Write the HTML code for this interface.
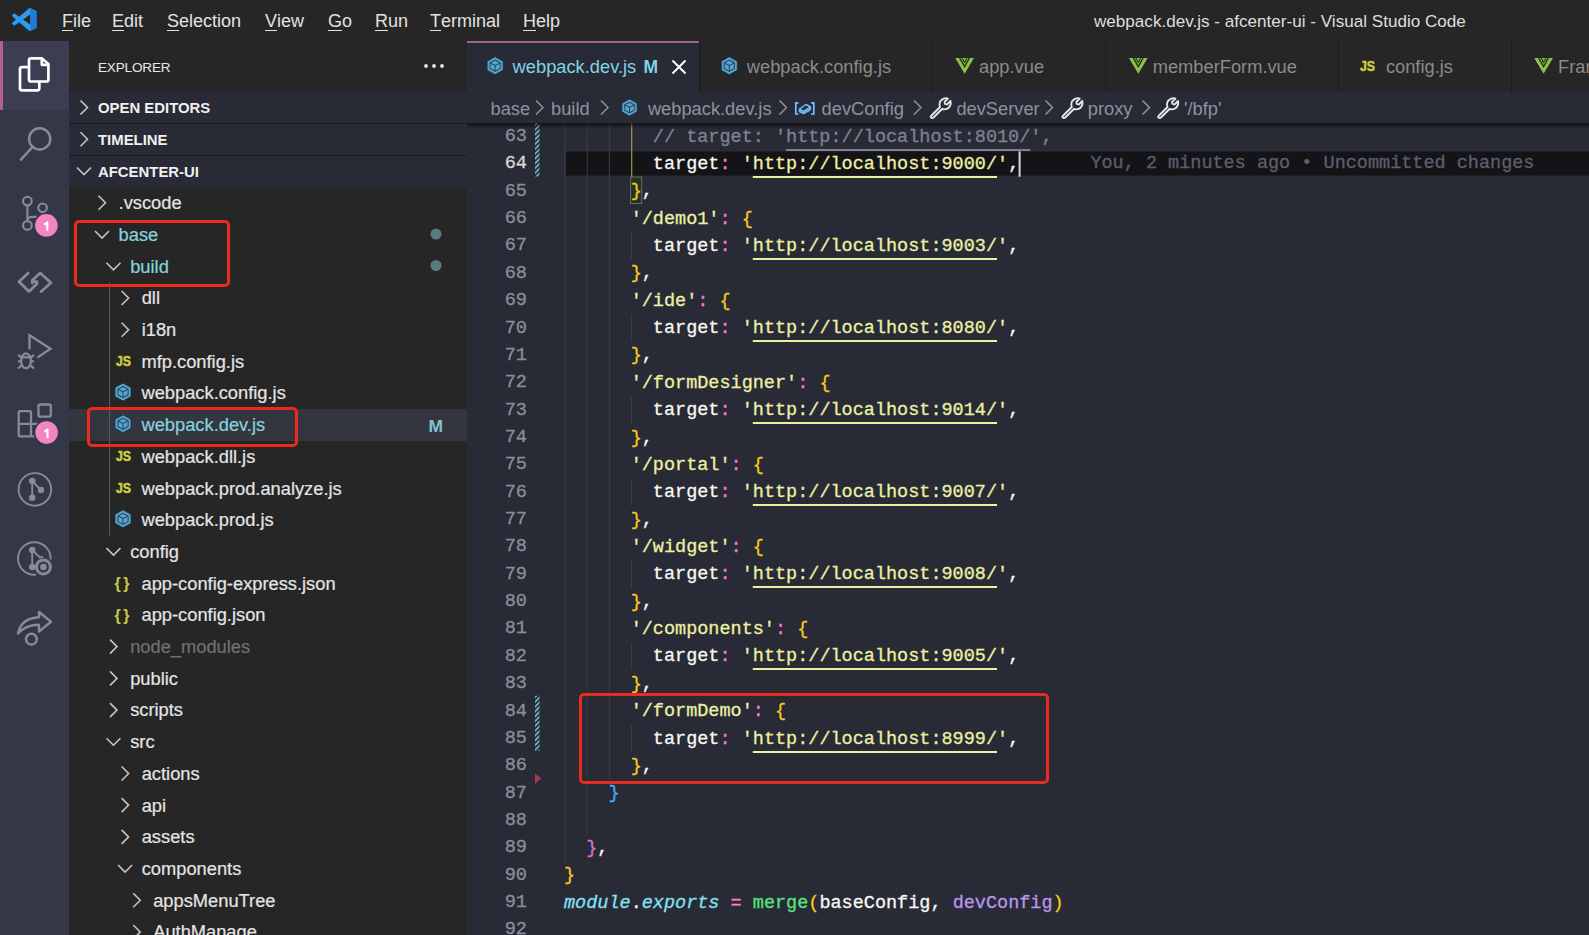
<!DOCTYPE html>
<html><head><meta charset="utf-8">
<style>
*{margin:0;padding:0;box-sizing:border-box}
html,body{width:1589px;height:935px;overflow:hidden;background:#282a36}
body{position:relative;font-family:"Liberation Sans",sans-serif}
.abs{position:absolute}
#title{position:absolute;left:0;top:0;width:1589px;height:41px;background:#262626}
.menu{position:absolute;top:10px;font-size:18px;color:#e2e2e2;line-height:22px;white-space:pre}
.menu u{text-decoration:none;border-bottom:1.3px solid #e2e2e2;display:inline-block;line-height:17px}
#wtitle{position:absolute;left:1094px;top:11px;font-size:17.1px;color:#dedede;line-height:22px;white-space:pre}
#act{position:absolute;left:0;top:41px;width:69px;height:894px;background:#343746}
#actsel{position:absolute;left:0;top:0;width:69px;height:69px;background:#3c3d51}
#actbar{position:absolute;left:0;top:0;width:3px;height:69px;background:#b3628f}
.aicon{position:absolute;left:17px;width:35px;height:35px}
.badge{position:absolute;width:22px;height:22px;border-radius:11px;background:#ff79c6;color:#fff;font-size:12.5px;font-weight:700;text-align:center;line-height:22px}
#side{position:absolute;left:69px;top:41px;width:398px;height:894px;background:#262626}
#explorer{position:absolute;left:29px;top:16.5px;font-size:13.6px;color:#e6e6e6;line-height:20px;letter-spacing:-0.2px}
.sechead{position:absolute;left:0;width:398px;height:32px;background:#282a36;border-top:1px solid #1b1c22}
.sechead span{position:absolute;left:29px;top:6px;font-size:14.9px;font-weight:700;color:#f0f0f0;line-height:20px}
.chev{position:absolute}
.row{position:absolute;left:0;width:398px;height:31.7px}
.row .t{position:absolute;top:5.3px;font-size:18.3px;line-height:22px;color:#e4e4e4;white-space:pre;-webkit-text-stroke:0.2px currentColor}
#tabs{position:absolute;left:467px;top:41px;width:1122px;height:50.5px;background:#262626}
.tab{position:absolute;top:0;height:50.5px}
.tab .t{position:absolute;top:14.5px;font-size:18.3px;line-height:22px;color:#8b8b8b;white-space:pre}
.tsep{position:absolute;top:0;width:1px;height:50.5px;background:#1c1c1c}
#crumbs{position:absolute;left:467px;top:91.5px;width:1122px;height:31.5px;background:#282a36}
.cr{position:absolute;top:6.3px;font-size:18.3px;line-height:22px;color:#8f929e;white-space:pre}
#editor{position:absolute;left:467px;top:123px;width:1122px;height:812px;background:#282a36}
.ln{position:absolute;left:564px;height:27.36px;line-height:27.36px;font-family:"Liberation Mono",monospace;font-size:18.5px;white-space:pre;color:#f8f8f2;-webkit-text-stroke:0.3px currentColor}
.lnum{position:absolute;left:466px;width:61px;margin-top:0px;text-align:right;height:27.36px;line-height:27.36px;font-family:"Liberation Mono",monospace;font-size:18.6px;color:#8a8e9c;white-space:pre;-webkit-text-stroke:0.3px currentColor}
.lnum.cur{color:#d8d8d8}
.u{text-decoration:underline;text-decoration-thickness:1.5px;text-underline-offset:6.5px;text-decoration-skip-ink:none}
.uc{text-decoration:underline;text-decoration-thickness:1.5px;text-underline-offset:6.5px;text-decoration-skip-ink:none}
.i{font-style:italic}
.guide{position:absolute;width:1px;background:#3c3e4a}
.redbox{position:absolute;border:3.4px solid #e82a1f;border-radius:5px}
</style></head><body>

<!-- TITLE BAR -->
<div id="title">
  <svg class="abs" style="left:12px;top:7.9px" width="24.5" height="23" viewBox="0 0 100 100" preserveAspectRatio="none"><path fill="#2f9bf0" d="M96.46 10.8L75.86.87a6.23 6.23 0 0 0-7.1 1.2L29.33 38.04 12.16 25a4.16 4.16 0 0 0-5.32.24L1.33 30.25a4.16 4.16 0 0 0 0 6.16L16.2 50 1.33 63.59a4.16 4.16 0 0 0 0 6.16l5.5 5.01a4.16 4.16 0 0 0 5.33.24l17.17-13.04 39.43 35.96a6.22 6.22 0 0 0 7.1 1.2l20.6-9.92a6.25 6.25 0 0 0 3.54-5.63V16.43a6.25 6.25 0 0 0-3.54-5.63zM75.02 72.7L45.1 50l29.92-22.7v45.4z"/><path fill="#1b7ad0" d="M75.02 0.9 L96.46 10.8 a6.25 6.25 0 0 1 3.54 5.63 V83.57 a6.25 6.25 0 0 1-3.54 5.63 L75.02 99.1 Z" opacity="0.9"/></svg>
  <div class="menu" style="left:62px"><u>F</u>ile</div>
  <div class="menu" style="left:112px"><u>E</u>dit</div>
  <div class="menu" style="left:167px"><u>S</u>election</div>
  <div class="menu" style="left:265px"><u>V</u>iew</div>
  <div class="menu" style="left:328px"><u>G</u>o</div>
  <div class="menu" style="left:375px"><u>R</u>un</div>
  <div class="menu" style="left:430px"><u>T</u>erminal</div>
  <div class="menu" style="left:523px"><u>H</u>elp</div>
  <div id="wtitle">webpack.dev.js - afcenter-ui - Visual Studio Code</div>
</div>

<!-- ACTIVITY BAR -->
<div id="act">
  <div id="actsel"></div><div id="actbar"></div>
  <svg class="abs" style="left:0;top:-41px" width="69" height="935" viewBox="0 0 69 935"><g fill="none" stroke="#ffffff" stroke-width="2.7" stroke-linejoin="round">
<path d="M31 58.4 H42 L48.4 64 V79.5 Q48.4 81.5 46.4 81.5 H31 Q29 81.5 29 79.5 V60.4 Q29 58.4 31 58.4 Z"/>
<path d="M41.8 58.4 V64.8 H48.4"/>
<path d="M29 67.2 H22 Q20 67.2 20 69.2 V88.3 Q20 90.3 22 90.3 H37.3 Q39.3 90.3 39.3 88.3 V81.5"/>
</g>
<g fill="none" stroke="#868a99" stroke-width="2.5" stroke-linecap="butt">
<circle cx="39.7" cy="138.9" r="10.6"/><path d="M32 147.5 L20.3 160.3"/></g>
<g fill="none" stroke="#868a99" stroke-width="2.1">
<circle cx="27.4" cy="201.1" r="4.3"/><circle cx="27.4" cy="225.4" r="4.3"/><circle cx="42.6" cy="207.8" r="4.3"/>
<path d="M27.4 205.4 V221.1"/><path d="M27.4 220 Q28 216.9 33 216.9 H37 Q42.6 216.9 42.6 212.1"/></g>
<g fill="none" stroke="#868a99" stroke-width="2.8" stroke-linecap="round" stroke-linejoin="round">
<path d="M28.2 273 L19 281.8 L29 291.5 L36.8 284 V281.7 H32.5"/>
<path d="M41.2 291.5 L51 282.8 L40.2 273 L32.3 280.3 V283"/></g>
<g fill="none" stroke="#868a99" stroke-width="2.3" stroke-linecap="butt" stroke-linejoin="miter">
<path d="M29.5 349.5 V335.2 L50.5 348.7 L37.5 357.5"/>
<ellipse cx="26" cy="360.8" rx="4.9" ry="7.4"/><path d="M21.1 357.3 H30.9"/>
<path d="M18 355 L21.5 357.5 M18 361.3 H21.1 M18 368.5 L21.7 365.3 M34 355 L30.5 357.5 M34 361.3 H30.9 M34 368.5 L30.3 365.3"/></g>
<g fill="none" stroke="#868a99" stroke-width="2.3" stroke-linejoin="round">
<rect x="18.7" y="411.2" width="12.3" height="25.1" rx="1.5"/><path d="M18.7 423.9 H46 V436.3 H31"/>
<rect x="38.5" y="404.5" width="12.3" height="12.1" rx="1.5"/></g>
<g fill="#868a99" stroke="none">
<circle cx="34.9" cy="489.4" r="16.3" fill="none" stroke="#868a99" stroke-width="1.9"/>
<circle cx="32.2" cy="481.1" r="3.3"/><circle cx="32.2" cy="497.7" r="3.3"/><circle cx="41" cy="490" r="3.2"/>
<path d="M32.2 481 V497.7 M32.2 481 L41 490" stroke="#868a99" stroke-width="1.9"/></g>
<g fill="#868a99" stroke="none">
<path d="M50.6 559.5 A16.3 16.3 0 1 0 36 574.7" fill="none" stroke="#868a99" stroke-width="1.9"/>
<circle cx="32.2" cy="550.1" r="3.3"/><circle cx="32.2" cy="567" r="3.3"/>
<path d="M32.2 550 V567 M32.2 550 L40 557.5 L43 556.8" fill="none" stroke="#868a99" stroke-width="1.9"/>
<circle cx="43.4" cy="567" r="7" fill="none" stroke="#868a99" stroke-width="3"/><circle cx="43.4" cy="567" r="3.3"/></g>
<g fill="none" stroke="#868a99" stroke-width="2.4" stroke-linejoin="round" stroke-linecap="round">
<path d="M18 633.5 Q21 618 39 617.2 V612 L51 621.8 L39 631.5 V624.7 Q26 624.7 18 633.5 Z"/>
<circle cx="31.4" cy="639.2" r="5.4"/></g><circle cx="46.4" cy="225.4" r="13" fill="#343746"/><circle cx="46.4" cy="225.4" r="11.3" fill="#f385c1"/>
<path d="M47.3 230.8 V222.3 L44.2 224.6" fill="none" stroke="#ffffff" stroke-width="2.1" stroke-linejoin="round"/>
<circle cx="46.6" cy="432.6" r="13" fill="#343746"/><circle cx="46.6" cy="432.6" r="11.3" fill="#f385c1"/>
<path d="M47.5 438 V429.5 L44.4 431.8" fill="none" stroke="#ffffff" stroke-width="2.1" stroke-linejoin="round"/></svg>
</div>

<!-- SIDEBAR -->
<div id="side">
  <div id="explorer">EXPLORER</div>
  <svg class="abs" style="left:354px;top:22px" width="22" height="6"><circle cx="3" cy="3" r="1.9" fill="#e6e6e6"/><circle cx="11" cy="3" r="1.9" fill="#e6e6e6"/><circle cx="19" cy="3" r="1.9" fill="#e6e6e6"/></svg>
  <div class="sechead" style="top:50.5px;border-top:none"><span>OPEN EDITORS</span></div>
<div class="sechead" style="top:82.2px"><span>TIMELINE</span></div>
<div class="sechead" style="top:114.0px"><span>AFCENTER-UI</span></div>
<div class="row" style="top:146.0px"><div class="t" style="left:49.6px;color:#e4e4e4">.vscode</div></div>
<div class="row" style="top:177.7px"><div class="t" style="left:49.6px;color:#86d3dd">base</div></div>
<div class="row" style="top:209.4px"><div class="t" style="left:61.2px;color:#86d3dd">build</div></div>
<div class="row" style="top:241.1px"><div class="t" style="left:72.7px;color:#e4e4e4">dll</div></div>
<div class="row" style="top:272.8px"><div class="t" style="left:72.7px;color:#e4e4e4">i18n</div></div>
<div class="row" style="top:304.5px"><div class="t" style="left:72.5px;color:#e4e4e4">mfp.config.js</div></div>
<div class="row" style="top:336.2px"><div class="t" style="left:72.5px;color:#e4e4e4">webpack.config.js</div></div>
<div class="row" style="top:367.9px;background:#34363f"></div>
<div class="row" style="top:367.9px"><div class="t" style="left:72.5px;color:#86d3dd">webpack.dev.js</div></div>
<div class="row" style="top:399.6px"><div class="t" style="left:72.5px;color:#e4e4e4">webpack.dll.js</div></div>
<div class="row" style="top:431.3px"><div class="t" style="left:72.5px;color:#e4e4e4">webpack.prod.analyze.js</div></div>
<div class="row" style="top:463.0px"><div class="t" style="left:72.5px;color:#e4e4e4">webpack.prod.js</div></div>
<div class="row" style="top:494.7px"><div class="t" style="left:61.2px;color:#e4e4e4">config</div></div>
<div class="row" style="top:526.4px"><div class="t" style="left:72.5px;color:#e4e4e4">app-config-express.json</div></div>
<div class="row" style="top:558.1px"><div class="t" style="left:72.5px;color:#e4e4e4">app-config.json</div></div>
<div class="row" style="top:589.8px"><div class="t" style="left:61.2px;color:#707070">node_modules</div></div>
<div class="row" style="top:621.5px"><div class="t" style="left:61.2px;color:#e4e4e4">public</div></div>
<div class="row" style="top:653.2px"><div class="t" style="left:61.2px;color:#e4e4e4">scripts</div></div>
<div class="row" style="top:684.9px"><div class="t" style="left:61.2px;color:#e4e4e4">src</div></div>
<div class="row" style="top:716.6px"><div class="t" style="left:72.7px;color:#e4e4e4">actions</div></div>
<div class="row" style="top:748.3px"><div class="t" style="left:72.7px;color:#e4e4e4">api</div></div>
<div class="row" style="top:780.0px"><div class="t" style="left:72.7px;color:#e4e4e4">assets</div></div>
<div class="row" style="top:811.7px"><div class="t" style="left:72.7px;color:#e4e4e4">components</div></div>
<div class="row" style="top:843.4px"><div class="t" style="left:84.2px;color:#e4e4e4">appsMenuTree</div></div>
<div class="row" style="top:875.1px"><div class="t" style="left:84.2px;color:#e4e4e4">AuthManage</div></div><svg class="abs" style="left:-69px;top:-41px" width="466" height="935"><path d="M80.5 100.5 L87.5 107.5 L80.5 114.5" fill="none" stroke="#c5c5c5" stroke-width="1.6"/><path d="M80.5 132.2 L87.5 139.2 L80.5 146.2" fill="none" stroke="#c5c5c5" stroke-width="1.6"/><path d="M77.0 167.5 L84.0 174.5 L91.0 167.5" fill="none" stroke="#c5c5c5" stroke-width="1.6"/><path d="M98.5 195.8 L105.5 202.8 L98.5 209.8" fill="none" stroke="#c5c5c5" stroke-width="1.6"/><path d="M95.0 231.0 L102.0 238.0 L109.0 231.0" fill="none" stroke="#c5c5c5" stroke-width="1.6"/><path d="M106.5 262.8 L113.5 269.8 L120.5 262.8" fill="none" stroke="#c5c5c5" stroke-width="1.6"/><path d="M121.6 291.0 L128.6 298.0 L121.6 305.0" fill="none" stroke="#c5c5c5" stroke-width="1.6"/><path d="M121.6 322.7 L128.6 329.7 L121.6 336.7" fill="none" stroke="#c5c5c5" stroke-width="1.6"/><text x="116.0" y="366.2" font-family="Liberation Sans" font-weight="700" font-size="15.5" fill="#cbcb41" stroke="#cbcb41" stroke-width="0.6" textLength="15" lengthAdjust="spacingAndGlyphs">JS</text><polygon points="123.00,383.05 131.05,387.55 131.05,396.55 123.00,401.05 114.95,396.55 114.95,387.55" fill="#5fa3c8" stroke="#11304a" stroke-width="0.9"/><polygon points="123.00,386.45 128.11,389.25 128.11,394.85 123.00,397.65 117.89,394.85 117.89,389.25" fill="none" stroke="#1f4f6e" stroke-width="1.1"/><path d="M123.00 391.75 L123.00 397.65 M123.00 391.75 L117.89 389.25 M123.00 391.75 L128.11 389.25" stroke="#1f4f6e" stroke-width="1.1"/><polygon points="123.00,414.75 131.05,419.25 131.05,428.25 123.00,432.75 114.95,428.25 114.95,419.25" fill="#5fa3c8" stroke="#11304a" stroke-width="0.9"/><polygon points="123.00,418.15 128.11,420.95 128.11,426.55 123.00,429.35 117.89,426.55 117.89,420.95" fill="none" stroke="#1f4f6e" stroke-width="1.1"/><path d="M123.00 423.45 L123.00 429.35 M123.00 423.45 L117.89 420.95 M123.00 423.45 L128.11 420.95" stroke="#1f4f6e" stroke-width="1.1"/><text x="116.0" y="461.3" font-family="Liberation Sans" font-weight="700" font-size="15.5" fill="#cbcb41" stroke="#cbcb41" stroke-width="0.6" textLength="15" lengthAdjust="spacingAndGlyphs">JS</text><text x="116.0" y="493.0" font-family="Liberation Sans" font-weight="700" font-size="15.5" fill="#cbcb41" stroke="#cbcb41" stroke-width="0.6" textLength="15" lengthAdjust="spacingAndGlyphs">JS</text><polygon points="123.00,509.85 131.05,514.35 131.05,523.35 123.00,527.85 114.95,523.35 114.95,514.35" fill="#5fa3c8" stroke="#11304a" stroke-width="0.9"/><polygon points="123.00,513.25 128.11,516.05 128.11,521.65 123.00,524.45 117.89,521.65 117.89,516.05" fill="none" stroke="#1f4f6e" stroke-width="1.1"/><path d="M123.00 518.55 L123.00 524.45 M123.00 518.55 L117.89 516.05 M123.00 518.55 L128.11 516.05" stroke="#1f4f6e" stroke-width="1.1"/><path d="M106.5 548.1 L113.5 555.1 L120.5 548.1" fill="none" stroke="#c5c5c5" stroke-width="1.6"/><text x="114.5" y="589.2" font-family="Liberation Sans" font-weight="700" font-size="16" fill="#cbcb41" textLength="15" lengthAdjust="spacing">{ }</text><text x="114.5" y="620.9" font-family="Liberation Sans" font-weight="700" font-size="16" fill="#cbcb41" textLength="15" lengthAdjust="spacing">{ }</text><path d="M110.0 639.6 L117.0 646.6 L110.0 653.6" fill="none" stroke="#c5c5c5" stroke-width="1.6"/><path d="M110.0 671.4 L117.0 678.4 L110.0 685.4" fill="none" stroke="#c5c5c5" stroke-width="1.6"/><path d="M110.0 703.1 L117.0 710.1 L110.0 717.1" fill="none" stroke="#c5c5c5" stroke-width="1.6"/><path d="M106.5 738.2 L113.5 745.2 L120.5 738.2" fill="none" stroke="#c5c5c5" stroke-width="1.6"/><path d="M121.6 766.5 L128.6 773.5 L121.6 780.5" fill="none" stroke="#c5c5c5" stroke-width="1.6"/><path d="M121.6 798.1 L128.6 805.1 L121.6 812.1" fill="none" stroke="#c5c5c5" stroke-width="1.6"/><path d="M121.6 829.9 L128.6 836.9 L121.6 843.9" fill="none" stroke="#c5c5c5" stroke-width="1.6"/><path d="M118.1 865.0 L125.1 872.0 L132.1 865.0" fill="none" stroke="#c5c5c5" stroke-width="1.6"/><path d="M133.2 893.2 L140.2 900.2 L133.2 907.2" fill="none" stroke="#c5c5c5" stroke-width="1.6"/><path d="M133.2 925.0 L140.2 932.0 L133.2 939.0" fill="none" stroke="#c5c5c5" stroke-width="1.6"/><circle cx="436" cy="234" r="5.5" fill="#587a80"/><circle cx="436" cy="265.5" r="5.5" fill="#587a80"/><text x="428.5" y="431.5" font-family="Liberation Sans" font-weight="700" font-size="16.5" fill="#7fc5d0" textLength="14.5" lengthAdjust="spacingAndGlyphs">M</text><path d="M109.5 282.5 V535.5" stroke="#585858" stroke-width="1"/></svg>
</div>

<!-- TABS -->
<div id="tabs">
  <div class="tab" style="left:0px;width:232px;background:#282a36"></div>
<div class="abs" style="left:0px;top:0;width:232px;height:2.3px;background:#a0648a"></div>
<div class="t abs" style="left:45.6px;top:14.5px;font-size:18.3px;line-height:22px;color:#80d4e3;white-space:pre">webpack.dev.js</div>
<div class="tsep" style="left:231.5px"></div>
<div class="t abs" style="left:279.8px;top:14.5px;font-size:18.3px;line-height:22px;color:#8b8b8b;white-space:pre">webpack.config.js</div>
<div class="tsep" style="left:464.5px"></div>
<div class="t abs" style="left:512.0px;top:14.5px;font-size:18.3px;line-height:22px;color:#8b8b8b;white-space:pre">app.vue</div>
<div class="tsep" style="left:638.1px"></div>
<div class="t abs" style="left:685.7px;top:14.5px;font-size:18.3px;line-height:22px;color:#8b8b8b;white-space:pre">memberForm.vue</div>
<div class="tsep" style="left:870.7px"></div>
<div class="t abs" style="left:918.9px;top:14.5px;font-size:18.3px;line-height:22px;color:#8b8b8b;white-space:pre">config.js</div>
<div class="tsep" style="left:1044.0px"></div>
<div class="t abs" style="left:1091.0px;top:14.5px;font-size:18.3px;line-height:22px;color:#8b8b8b;white-space:pre">Fran</div>
<div class="abs" style="left:176.5px;top:14.5px;font-size:17.5px;font-weight:700;line-height:22px;color:#80d4e3">M</div><svg class="abs" style="left:-467px;top:-41px" width="1589" height="140"><polygon points="495.10,56.70 503.15,61.20 503.15,70.20 495.10,74.70 487.05,70.20 487.05,61.20" fill="#5fa3c8" stroke="#11304a" stroke-width="0.9"/><polygon points="495.10,60.10 500.21,62.90 500.21,68.50 495.10,71.30 489.99,68.50 489.99,62.90" fill="none" stroke="#1f4f6e" stroke-width="1.1"/><path d="M495.10 65.40 L495.10 71.30 M495.10 65.40 L489.99 62.90 M495.10 65.40 L500.21 62.90" stroke="#1f4f6e" stroke-width="1.1"/><polygon points="729.30,56.70 737.35,61.20 737.35,70.20 729.30,74.70 721.25,70.20 721.25,61.20" fill="#5fa3c8" stroke="#11304a" stroke-width="0.9"/><polygon points="729.30,60.10 734.41,62.90 734.41,68.50 729.30,71.30 724.19,68.50 724.19,62.90" fill="none" stroke="#1f4f6e" stroke-width="1.1"/><path d="M729.30 65.40 L729.30 71.30 M729.30 65.40 L724.19 62.90 M729.30 65.40 L734.41 62.90" stroke="#1f4f6e" stroke-width="1.1"/><path d="M955.25 58.10 L973.95 58.10 L964.60 73.80 Z" fill="#8dc149"/><path d="M959.70 58.10 L964.60 66.60 L969.30 58.10" fill="none" stroke="#1f3516" stroke-width="1.4"/><path d="M962.10 58.10 L964.60 62.40 L967.00 58.10" fill="none" stroke="#1f3516" stroke-width="1.1"/><path d="M1128.95 58.10 L1147.65 58.10 L1138.30 73.80 Z" fill="#8dc149"/><path d="M1133.40 58.10 L1138.30 66.60 L1143.00 58.10" fill="none" stroke="#1f3516" stroke-width="1.4"/><path d="M1135.80 58.10 L1138.30 62.40 L1140.70 58.10" fill="none" stroke="#1f3516" stroke-width="1.1"/><text x="1359.9" y="70.8" font-family="Liberation Sans" font-weight="700" font-size="15.5" fill="#cbcb41" stroke="#cbcb41" stroke-width="0.6" textLength="15" lengthAdjust="spacingAndGlyphs">JS</text><path d="M1534.25 58.10 L1552.95 58.10 L1543.60 73.80 Z" fill="#8dc149"/><path d="M1538.70 58.10 L1543.60 66.60 L1548.30 58.10" fill="none" stroke="#1f3516" stroke-width="1.4"/><path d="M1541.10 58.10 L1543.60 62.40 L1546.00 58.10" fill="none" stroke="#1f3516" stroke-width="1.1"/><path d="M672.5 60.5 L685.5 73.5 M685.5 60.5 L672.5 73.5" stroke="#ffffff" stroke-width="1.9"/></svg>
</div>

<!-- BREADCRUMBS -->
<div id="crumbs">
  <div class="cr" style="left:23.5px">base</div>
<div class="cr" style="left:84.0px">build</div>
<div class="cr" style="left:180.9px">webpack.dev.js</div>
<div class="cr" style="left:354.6px">devConfig</div>
<div class="cr" style="left:489.4px">devServer</div>
<div class="cr" style="left:620.8px">proxy</div>
<div class="cr" style="left:717.0px">&#x27;/bfp&#x27;</div><svg class="abs" style="left:-467px;top:-91.5px" width="1589" height="140"><path d="M536.0 100.5 L543.0 107.5 L536.0 114.5" fill="none" stroke="#8f929e" stroke-width="1.5"/><path d="M601.0 100.5 L608.0 107.5 L601.0 114.5" fill="none" stroke="#8f929e" stroke-width="1.5"/><path d="M779.5 100.5 L786.5 107.5 L779.5 114.5" fill="none" stroke="#8f929e" stroke-width="1.5"/><path d="M914.0 100.5 L921.0 107.5 L914.0 114.5" fill="none" stroke="#8f929e" stroke-width="1.5"/><path d="M1045.5 100.5 L1052.5 107.5 L1045.5 114.5" fill="none" stroke="#8f929e" stroke-width="1.5"/><path d="M1142.5 100.5 L1149.5 107.5 L1142.5 114.5" fill="none" stroke="#8f929e" stroke-width="1.5"/><polygon points="629.50,98.95 637.15,103.22 637.15,111.78 629.50,116.05 621.85,111.78 621.85,103.22" fill="#5fa3c8" stroke="#11304a" stroke-width="0.9"/><polygon points="629.50,102.18 634.35,104.84 634.35,110.16 629.50,112.82 624.65,110.16 624.65,104.84" fill="none" stroke="#1f4f6e" stroke-width="1.1"/><path d="M629.50 107.22 L629.50 112.82 M629.50 107.22 L624.65 104.84 M629.50 107.22 L634.35 104.84" stroke="#1f4f6e" stroke-width="1.1"/><path d="M798.5 102.8 H795.8 V114 H798.5 M811 102.8 H813.8 V114 H811" fill="none" stroke="#75beff" stroke-width="1.7"/><path d="M799.5 109 L806 104.5 L810.5 107 L810 110 L803.5 113.5 L799.5 111.5 Z M800 109.5 L803.5 111.5 L810 107.5 M803.5 111.5 V113" fill="none" stroke="#75beff" stroke-width="1.5" stroke-linejoin="round"/><g transform="translate(929.5,97.5)" fill="none" stroke="#e8e8e8" stroke-width="1.8" stroke-linejoin="round"><path d="M2 18 L10.5 9.5 Q9 5 12 2.5 Q15 0 18.5 1 L15 4.5 L15.5 6.5 L17.5 7 L21 3.5 Q22 7 19.5 10 Q17 12.5 12.5 11.5 L4 20 Q2.5 21 1.5 20 Q0.5 19 2 18 Z"/></g><g transform="translate(1061.3,97.5)" fill="none" stroke="#e8e8e8" stroke-width="1.8" stroke-linejoin="round"><path d="M2 18 L10.5 9.5 Q9 5 12 2.5 Q15 0 18.5 1 L15 4.5 L15.5 6.5 L17.5 7 L21 3.5 Q22 7 19.5 10 Q17 12.5 12.5 11.5 L4 20 Q2.5 21 1.5 20 Q0.5 19 2 18 Z"/></g><g transform="translate(1157,97.5)" fill="none" stroke="#e8e8e8" stroke-width="1.8" stroke-linejoin="round"><path d="M2 18 L10.5 9.5 Q9 5 12 2.5 Q15 0 18.5 1 L15 4.5 L15.5 6.5 L17.5 7 L21 3.5 Q22 7 19.5 10 Q17 12.5 12.5 11.5 L4 20 Q2.5 21 1.5 20 Q0.5 19 2 18 Z"/></g></svg>
</div>

<!-- EDITOR -->
<div id="editor"></div>
<svg class="abs" style="left:0;top:0" width="1589" height="935"><rect x="565" y="150.96" width="1030" height="25.16" fill="#141318" stroke="#2c3630" stroke-width="1"/><rect x="564.50" y="123.00" width="1" height="738.72" fill="#3b3d4b"/><rect x="586.70" y="123.00" width="1" height="711.36" fill="#3b3d4b"/><rect x="608.90" y="123.00" width="1" height="656.64" fill="#3b3d4b"/><rect x="631.10" y="123" width="1.2" height="54.72" fill="#a59a48"/><rect x="631.10" y="232.44" width="1" height="27.36" fill="#3b3d4b"/><rect x="631.10" y="314.52" width="1" height="27.36" fill="#3b3d4b"/><rect x="631.10" y="396.60" width="1" height="27.36" fill="#3b3d4b"/><rect x="631.10" y="478.68" width="1" height="27.36" fill="#3b3d4b"/><rect x="631.10" y="560.76" width="1" height="27.36" fill="#3b3d4b"/><rect x="631.10" y="642.84" width="1" height="27.36" fill="#3b3d4b"/><rect x="631.10" y="724.92" width="1" height="27.36" fill="#3b3d4b"/><rect x="630.60" y="177.12" width="11.10" height="26.36" fill="#26302a" stroke="#6d6e5c" stroke-width="1"/><defs><pattern id="hatch" width="3.4" height="3.4" patternUnits="userSpaceOnUse" patternTransform="rotate(45)"><rect width="1.8" height="3.4" fill="#6fb0bf"/></pattern></defs><rect x="535" y="123" width="4.5" height="53.52" fill="url(#hatch)"/><rect x="535" y="695.76" width="4.5" height="55.22" fill="url(#hatch)"/><path d="M535 773.5 L541.5 778.5 L535 783.7 Z" fill="#9e3d4d"/><rect x="1018.6" y="151.36" width="2" height="25.36" fill="#d8d8d8"/><defs><linearGradient id="shd" x1="0" y1="0" x2="0" y2="1"><stop offset="0" stop-color="#000" stop-opacity="0.55"/><stop offset="1" stop-color="#000" stop-opacity="0"/></linearGradient></defs><rect x="467" y="123" width="1122" height="6" fill="url(#shd)"/></svg>
<div class="ln" style="top:123.60px"><span>        </span><span style="color:#7e8292">// target: </span><span style="color:#7e8292">&#x27;</span><span class="uc" style="color:#7e8292">http://localhost:8010/</span><span style="color:#7e8292">&#x27;</span><span style="color:#7e8292">,</span></div>
<div class="lnum" style="top:123.00px">63</div>
<div class="ln cur" style="top:150.96px"><span>        </span><span style="color:#f8f8f2">target</span><span style="color:#ff79c6">:</span><span> </span><span style="color:#e8ecb0">&#x27;</span><span class="u" style="color:#ecf0a2">http://localhost:9000/</span><span style="color:#e8ecb0">&#x27;</span><span style="color:#f8f8f2">,</span></div>
<div class="lnum cur" style="top:150.36px">64</div>
<div class="ln" style="top:178.32px"><span>      </span><span style="color:#f7c91c">}</span><span style="color:#f8f8f2">,</span></div>
<div class="lnum" style="top:177.72px">65</div>
<div class="ln" style="top:205.68px"><span>      </span><span style="color:#e8ecb0">&#x27;</span><span style="color:#ecf0a2">/demo1</span><span style="color:#e8ecb0">&#x27;</span><span style="color:#ff79c6">:</span><span> </span><span style="color:#f7c91c">{</span></div>
<div class="lnum" style="top:205.08px">66</div>
<div class="ln" style="top:233.04px"><span>        </span><span style="color:#f8f8f2">target</span><span style="color:#ff79c6">:</span><span> </span><span style="color:#e8ecb0">&#x27;</span><span class="u" style="color:#ecf0a2">http://localhost:9003/</span><span style="color:#e8ecb0">&#x27;</span><span style="color:#f8f8f2">,</span></div>
<div class="lnum" style="top:232.44px">67</div>
<div class="ln" style="top:260.40px"><span>      </span><span style="color:#f7c91c">}</span><span style="color:#f8f8f2">,</span></div>
<div class="lnum" style="top:259.80px">68</div>
<div class="ln" style="top:287.76px"><span>      </span><span style="color:#e8ecb0">&#x27;</span><span style="color:#ecf0a2">/ide</span><span style="color:#e8ecb0">&#x27;</span><span style="color:#ff79c6">:</span><span> </span><span style="color:#f7c91c">{</span></div>
<div class="lnum" style="top:287.16px">69</div>
<div class="ln" style="top:315.12px"><span>        </span><span style="color:#f8f8f2">target</span><span style="color:#ff79c6">:</span><span> </span><span style="color:#e8ecb0">&#x27;</span><span class="u" style="color:#ecf0a2">http://localhost:8080/</span><span style="color:#e8ecb0">&#x27;</span><span style="color:#f8f8f2">,</span></div>
<div class="lnum" style="top:314.52px">70</div>
<div class="ln" style="top:342.48px"><span>      </span><span style="color:#f7c91c">}</span><span style="color:#f8f8f2">,</span></div>
<div class="lnum" style="top:341.88px">71</div>
<div class="ln" style="top:369.84px"><span>      </span><span style="color:#e8ecb0">&#x27;</span><span style="color:#ecf0a2">/formDesigner</span><span style="color:#e8ecb0">&#x27;</span><span style="color:#ff79c6">:</span><span> </span><span style="color:#f7c91c">{</span></div>
<div class="lnum" style="top:369.24px">72</div>
<div class="ln" style="top:397.20px"><span>        </span><span style="color:#f8f8f2">target</span><span style="color:#ff79c6">:</span><span> </span><span style="color:#e8ecb0">&#x27;</span><span class="u" style="color:#ecf0a2">http://localhost:9014/</span><span style="color:#e8ecb0">&#x27;</span><span style="color:#f8f8f2">,</span></div>
<div class="lnum" style="top:396.60px">73</div>
<div class="ln" style="top:424.56px"><span>      </span><span style="color:#f7c91c">}</span><span style="color:#f8f8f2">,</span></div>
<div class="lnum" style="top:423.96px">74</div>
<div class="ln" style="top:451.92px"><span>      </span><span style="color:#e8ecb0">&#x27;</span><span style="color:#ecf0a2">/portal</span><span style="color:#e8ecb0">&#x27;</span><span style="color:#ff79c6">:</span><span> </span><span style="color:#f7c91c">{</span></div>
<div class="lnum" style="top:451.32px">75</div>
<div class="ln" style="top:479.28px"><span>        </span><span style="color:#f8f8f2">target</span><span style="color:#ff79c6">:</span><span> </span><span style="color:#e8ecb0">&#x27;</span><span class="u" style="color:#ecf0a2">http://localhost:9007/</span><span style="color:#e8ecb0">&#x27;</span><span style="color:#f8f8f2">,</span></div>
<div class="lnum" style="top:478.68px">76</div>
<div class="ln" style="top:506.64px"><span>      </span><span style="color:#f7c91c">}</span><span style="color:#f8f8f2">,</span></div>
<div class="lnum" style="top:506.04px">77</div>
<div class="ln" style="top:534.00px"><span>      </span><span style="color:#e8ecb0">&#x27;</span><span style="color:#ecf0a2">/widget</span><span style="color:#e8ecb0">&#x27;</span><span style="color:#ff79c6">:</span><span> </span><span style="color:#f7c91c">{</span></div>
<div class="lnum" style="top:533.40px">78</div>
<div class="ln" style="top:561.36px"><span>        </span><span style="color:#f8f8f2">target</span><span style="color:#ff79c6">:</span><span> </span><span style="color:#e8ecb0">&#x27;</span><span class="u" style="color:#ecf0a2">http://localhost:9008/</span><span style="color:#e8ecb0">&#x27;</span><span style="color:#f8f8f2">,</span></div>
<div class="lnum" style="top:560.76px">79</div>
<div class="ln" style="top:588.72px"><span>      </span><span style="color:#f7c91c">}</span><span style="color:#f8f8f2">,</span></div>
<div class="lnum" style="top:588.12px">80</div>
<div class="ln" style="top:616.08px"><span>      </span><span style="color:#e8ecb0">&#x27;</span><span style="color:#ecf0a2">/components</span><span style="color:#e8ecb0">&#x27;</span><span style="color:#ff79c6">:</span><span> </span><span style="color:#f7c91c">{</span></div>
<div class="lnum" style="top:615.48px">81</div>
<div class="ln" style="top:643.44px"><span>        </span><span style="color:#f8f8f2">target</span><span style="color:#ff79c6">:</span><span> </span><span style="color:#e8ecb0">&#x27;</span><span class="u" style="color:#ecf0a2">http://localhost:9005/</span><span style="color:#e8ecb0">&#x27;</span><span style="color:#f8f8f2">,</span></div>
<div class="lnum" style="top:642.84px">82</div>
<div class="ln" style="top:670.80px"><span>      </span><span style="color:#f7c91c">}</span><span style="color:#f8f8f2">,</span></div>
<div class="lnum" style="top:670.20px">83</div>
<div class="ln" style="top:698.16px"><span>      </span><span style="color:#e8ecb0">&#x27;</span><span style="color:#ecf0a2">/formDemo</span><span style="color:#e8ecb0">&#x27;</span><span style="color:#ff79c6">:</span><span> </span><span style="color:#f7c91c">{</span></div>
<div class="lnum" style="top:697.56px">84</div>
<div class="ln" style="top:725.52px"><span>        </span><span style="color:#f8f8f2">target</span><span style="color:#ff79c6">:</span><span> </span><span style="color:#e8ecb0">&#x27;</span><span class="u" style="color:#ecf0a2">http://localhost:8999/</span><span style="color:#e8ecb0">&#x27;</span><span style="color:#f8f8f2">,</span></div>
<div class="lnum" style="top:724.92px">85</div>
<div class="ln" style="top:752.88px"><span>      </span><span style="color:#f7c91c">}</span><span style="color:#f8f8f2">,</span></div>
<div class="lnum" style="top:752.28px">86</div>
<div class="ln" style="top:780.24px"><span>    </span><span style="color:#4ea6f7">}</span></div>
<div class="lnum" style="top:779.64px">87</div>
<div class="ln" style="top:807.60px"></div>
<div class="lnum" style="top:807.00px">88</div>
<div class="ln" style="top:834.96px"><span>  </span><span style="color:#da70d6">}</span><span style="color:#f8f8f2">,</span></div>
<div class="lnum" style="top:834.36px">89</div>
<div class="ln" style="top:862.32px"><span style="color:#f7c91c">}</span></div>
<div class="lnum" style="top:861.72px">90</div>
<div class="ln" style="top:889.68px"><span class="i" style="color:#86e0f2">module</span><span style="color:#f8f8f2">.</span><span class="i" style="color:#86e0f2">exports</span><span> </span><span style="color:#ff79c6">=</span><span> </span><span style="color:#55e47c">merge</span><span style="color:#f7c91c">(</span><span style="color:#f8f8f2">baseConfig</span><span style="color:#f8f8f2">, </span><span style="color:#b897ec">devConfig</span><span style="color:#f7c91c">)</span></div>
<div class="lnum" style="top:889.08px">91</div>
<div class="ln" style="top:917.04px"></div>
<div class="lnum" style="top:916.44px">92</div>
<div class="ln" style="left:1090.4px;top:150.36px;color:#5c5f6d">You, 2 minutes ago • Uncommitted changes</div><div class="redbox" style="left:74.3px;top:219.5px;width:155.4px;height:67.2px"></div><div class="redbox" style="left:87.3px;top:406.6px;width:211.2px;height:40px"></div><div class="redbox" style="left:578.5px;top:693.4px;width:470.1px;height:90.8px"></div>
</body></html>
